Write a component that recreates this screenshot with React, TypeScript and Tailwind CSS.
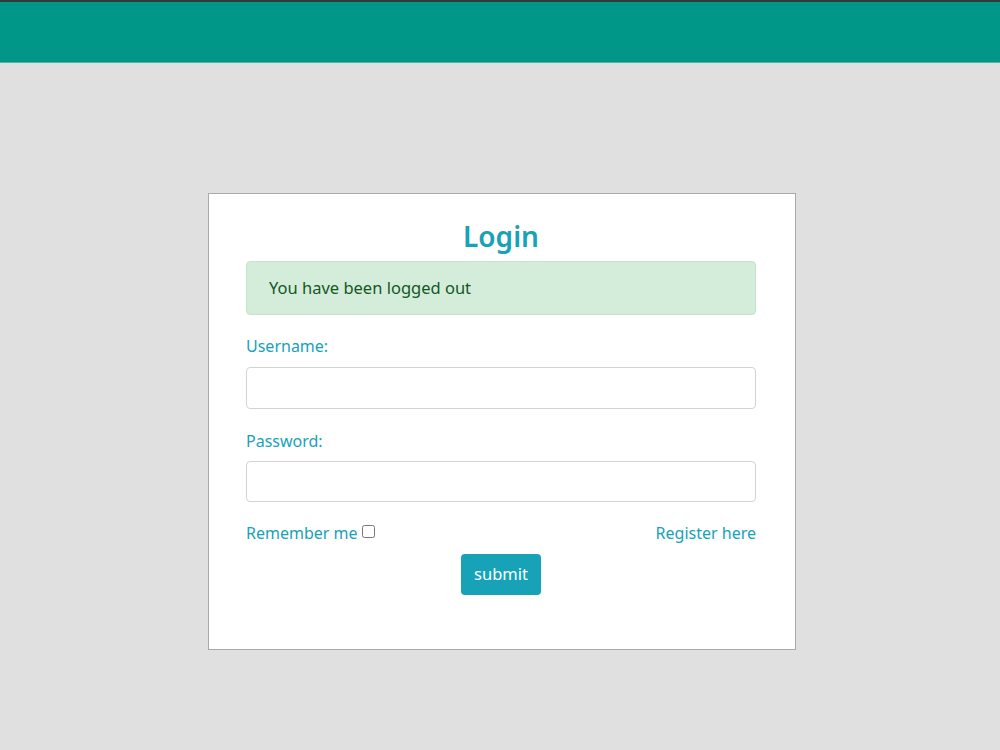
export default function App() {
  return (
    <div className="min-h-[750px] bg-[#e0e0e0] font-['Noto_Sans',sans-serif]">
      {/* Top bar */}
      <header className="h-[63px] border-t-2 border-b border-t-[#2f3a3a] border-b-[#4fb3aa] bg-[#009688]" />

      <main className="flex justify-center pt-[130px] pl-[4px]">
        <div className="w-[588px] h-[457px] border border-[#a9a9a9] bg-white pl-[37px] pr-[39px] pt-[20px]">
          <h2 className="text-center text-[28px] font-semibold leading-[44px] text-[#17a2b8]">Login</h2>

          <div className="mt-[3px] h-[54px] flex items-center rounded-[4px] border border-[#c3e6cb] bg-[#d4edda] px-[22px] text-[16.5px] text-[#155724]">
            You have been logged out
          </div>

          <form className="mt-[18px]">
            <label htmlFor="username" className="block text-[16px] leading-[26px] text-[#17a2b8]">
              Username:
            </label>
            <input
              id="username"
              type="text"
              className="mt-[8px] block h-[42px] w-full rounded-[4px] border border-[#ced4da] px-3 outline-none"
            />

            <label htmlFor="password" className="mt-[19px] block text-[16px] leading-[26px] text-[#17a2b8]">
              Password:
            </label>
            <input
              id="password"
              type="password"
              className="mt-[7px] block h-[41px] w-full rounded-[4px] border border-[#ced4da] px-3 outline-none"
            />

            <div className="mt-[18px] flex items-center justify-between text-[16px] leading-[26px] text-[#17a2b8]">
              <label className="flex items-center">
                Remember me
                <input type="checkbox" className="ml-[4px] -mt-[4px] h-[13px] w-[13px]" />
              </label>
              <a href="#" className="text-[#17a2b8]">Register here</a>
            </div>

            <div className="mt-[8px] flex justify-center">
              <button
                type="submit"
                className="h-[41px] w-[80px] rounded-[4px] bg-[#17a2b8] text-[16.5px] text-white"
              >
                submit
              </button>
            </div>
          </form>
        </div>
      </main>
    </div>
  )
}
